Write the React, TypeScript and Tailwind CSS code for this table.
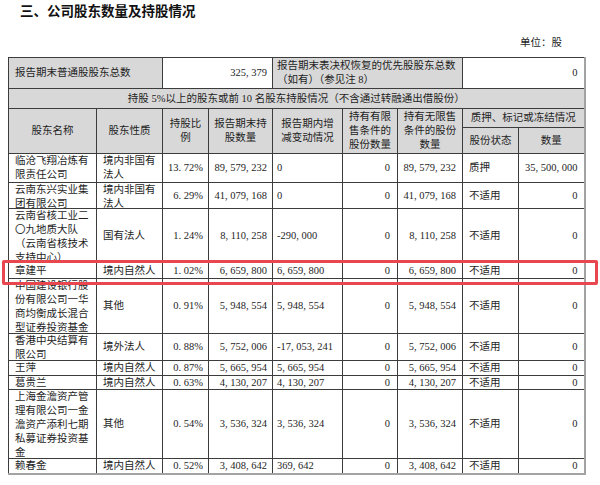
import React from "react";

type Holder = {
  name: string[];
  kind: string[];
  pct: string;
  held: string;
  change: string;
  limited: string;
  free: string;
  status: string;
  qty: string;
  h: number;
};

const holders: Holder[] = [
  { name: ["临沧飞翔冶炼有", "限责任公司"], kind: ["境内非国有", "法人"], pct: "13.72%", held: "89,579,232", change: "0", limited: "0", free: "89,579,232", status: "质押", qty: "35,500,000", h: 28 },
  { name: ["云南东兴实业集", "团有限公司"], kind: ["境内非国有", "法人"], pct: "6.29%", held: "41,079,168", change: "0", limited: "0", free: "41,079,168", status: "不适用", qty: "0", h: 25 },
  { name: ["云南省核工业二", "〇九地质大队", "（云南省核技术", "支持中心）"], kind: ["国有法人"], pct: "1.24%", held: "8,110,258", change: "-290,000", limited: "0", free: "8,110,258", status: "不适用", qty: "0", h: 53 },
  { name: ["章建平"], kind: ["境内自然人"], pct: "1.02%", held: "6,659,800", change: "6,659,800", limited: "0", free: "6,659,800", status: "不适用", qty: "0", h: 15 },
  { name: ["中国建设银行股", "份有限公司一华", "商均衡成长混合", "型证券投资基金"], kind: ["其他"], pct: "0.91%", held: "5,948,554", change: "5,948,554", limited: "0", free: "5,948,554", status: "不适用", qty: "0", h: 54 },
  { name: ["香港中央结算有", "限公司"], kind: ["境外法人"], pct: "0.88%", held: "5,752,006", change: "-17,053,241", limited: "0", free: "5,752,006", status: "不适用", qty: "0", h: 26 },
  { name: ["王萍"], kind: ["境内自然人"], pct: "0.87%", held: "5,665,954", change: "5,665,954", limited: "0", free: "5,665,954", status: "不适用", qty: "0", h: 14 },
  { name: ["葛贵兰"], kind: ["境内自然人"], pct: "0.63%", held: "4,130,207", change: "4,130,207", limited: "0", free: "4,130,207", status: "不适用", qty: "0", h: 13 },
  { name: ["上海金澹资产管", "理有限公司一金", "澹资产添利七期", "私募证券投资基", "金"], kind: ["其他"], pct: "0.54%", held: "3,536,324", change: "3,536,324", limited: "0", free: "3,536,324", status: "不适用", qty: "0", h: 68 },
  { name: ["赖春金"], kind: ["境内自然人"], pct: "0.52%", held: "3,408,642", change: "369,642", limited: "0", free: "3,408,642", status: "不适用", qty: "0", h: 14 },
];

// SimSun style spacing after separators
const sp = (s: string) => s.replace(/,/g, ", ").replace(/\./g, ". ");

const cell = "border border-[#3c3c3c] p-0";
const td = `${cell} align-top`;

function Box({
  h,
  className = "",
  children,
}: {
  h: number;
  className?: string;
  children: React.ReactNode;
}) {
  return (
    <div
      style={{ height: h }}
      className={`flex flex-col overflow-hidden leading-[14px] [justify-content:safe_center] ${className}`}
    >
      {children}
    </div>
  );
}

function Lines({ lines }: { lines: string[] }) {
  return (
    <>
      {lines.map((l, i) => (
        <span key={i} className="block whitespace-nowrap">
          {l}
        </span>
      ))}
    </>
  );
}

export default function App() {
  return (
    <div className="relative h-[485px] w-[600px] overflow-hidden bg-white font-['Liberation_Serif','Noto_Sans_CJK_SC',serif] text-[10.5px] text-[#1e1e1e]">
      <h2 className="pl-[20px] pt-[3px] text-[13.5px] font-bold leading-[18px] text-[#111]">
        三、公司股东数量及持股情况
      </h2>
      <div className="mt-[15px] pr-[38px] text-right leading-[14px]">单位：股</div>

      <table className="ml-[8px] mt-[7px] w-[576px] table-fixed border-collapse border-r-2 border-b-2 border-r-[#a3a3a3] border-b-[#a3a3a3]">
        <colgroup>
          <col className="w-[88px]" />
          <col className="w-[66px]" />
          <col className="w-[46px]" />
          <col className="w-[64px]" />
          <col className="w-[70px]" />
          <col className="w-[55px]" />
          <col className="w-[65px]" />
          <col className="w-[56px]" />
          <col className="w-[66px]" />
        </colgroup>
        <tbody>
          {/* totals */}
          <tr>
            <td colSpan={2} className={`${td} bg-[#d8d8d8]`}>
              <Box h={30} className="pl-[6px]">报告期末普通股股东总数</Box>
            </td>
            <td colSpan={2} className={td}>
              <Box h={30} className="items-end pr-[5px]">{sp("325,379")}</Box>
            </td>
            <td colSpan={3} className={`${td} bg-[#d8d8d8]`}>
              <Box h={30} className="pl-[4px]">
                <Lines lines={["报告期末表决权恢复的优先股股东总数", "（如有）（参见注 8）"]} />
              </Box>
            </td>
            <td colSpan={2} className={td}>
              <Box h={30} className="items-end pr-[6px]">0</Box>
            </td>
          </tr>
          <tr>
            <td colSpan={9} className={`${td} bg-[#d8d8d8]`}>
              <Box h={19} className="items-center">
                持股 5%以上的股东或前 10 名股东持股情况（不含通过转融通出借股份）
              </Box>
            </td>
          </tr>

          {/* header */}
          <tr className="bg-[#d8d8d8] text-center leading-[14px]">
            {[
              ["股东名称"],
              ["股东性质"],
              ["持股比", "例"],
              ["报告期末持", "股数量"],
              ["报告期内增", "减变动情况"],
              ["持有有限", "售条件的", "股份数量"],
              ["持有无限售", "条件的股份", "数量"],
            ].map((l, i) => (
              <td key={i} rowSpan={2} className={`${cell} align-middle`}>
                <Lines lines={l} />
              </td>
            ))}
            <td colSpan={2} className={td}>
              <Box h={18} className="items-center">质押、标记或冻结情况</Box>
            </td>
          </tr>
          <tr className="bg-[#d8d8d8] text-center">
            <td className={td}>
              <Box h={25} className="items-center">股份状态</Box>
            </td>
            <td className={td}>
              <Box h={25} className="items-center">数量</Box>
            </td>
          </tr>

          {holders.map((r, i) => (
            <tr key={i}>
              <td className={td}>
                <Box h={r.h} className="pl-[6px]">
                  <Lines lines={r.name} />
                </Box>
              </td>
              <td className={td}>
                <Box h={r.h} className="pl-[6px]">
                  <Lines lines={r.kind} />
                </Box>
              </td>
              <td className={td}>
                <Box h={r.h} className="items-end whitespace-nowrap pr-[5px]">{sp(r.pct)}</Box>
              </td>
              <td className={td}>
                <Box h={r.h} className="items-end whitespace-nowrap pr-[5px]">{sp(r.held)}</Box>
              </td>
              <td className={td}>
                <Box h={r.h} className="whitespace-nowrap pl-[4px]">{sp(r.change)}</Box>
              </td>
              <td className={td}>
                <Box h={r.h} className="items-end whitespace-nowrap pr-[7px]">{r.limited}</Box>
              </td>
              <td className={td}>
                <Box h={r.h} className="items-end whitespace-nowrap pr-[6px]">{sp(r.free)}</Box>
              </td>
              <td className={td}>
                <Box h={r.h} className="pl-[6px]">{r.status}</Box>
              </td>
              <td className={td}>
                <Box h={r.h} className="items-end whitespace-nowrap pr-[6px]">{sp(r.qty)}</Box>
              </td>
            </tr>
          ))}
        </tbody>
      </table>

      {/* highlight box */}
      <div className="absolute left-[2px] top-[260px] h-[25px] w-[596px] rounded-[2px] border-[3px] border-[#e9474f]" />
    </div>
  );
}
